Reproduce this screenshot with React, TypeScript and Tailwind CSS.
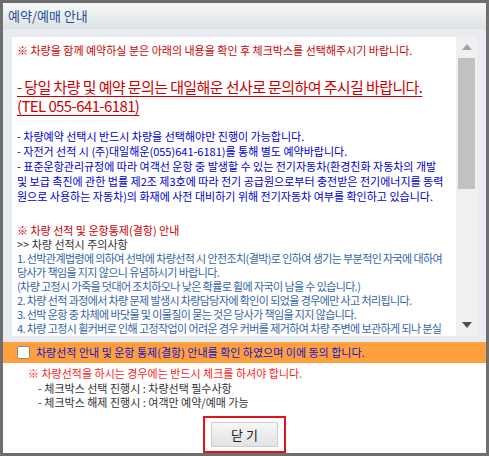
import { useState } from "react";

const font = { fontFamily: '"Noto Sans CJK KR", "Noto Sans", sans-serif' };

export default function App() {
  const [agree, setAgree] = useState(false);

  return (
    <div className="h-[456px] w-[489px] bg-[#6e6e6e] pt-[3px] pl-[3px]" style={font}>
      <div className="flex h-[450px] w-[483px] flex-col bg-white">
        {/* title bar */}
        <div className="flex h-[26px] items-center bg-gradient-to-b from-[#f7f8f9] to-[#dde2e6] pl-[5px] text-[13px] text-[#1d4f91]">
          예약/예매 안내
        </div>

        {/* body */}
        <div className="flex h-[316px] flex-col bg-[#e8ecf0] px-[9px] pt-[8px]">
          <div className="flex h-[299px]">
            <div className="h-full flex-1 overflow-hidden bg-white pl-[5px] pr-[11px] pt-[6px] text-[11px]">
              <p className="text-[11px] leading-[15px] text-[#cc0000]">
                ※ 차량을 함께 예약하실 분은 아래의 내용을 확인 후 체크박스를 선택해주시기 바랍니다.
              </p>
              <p className="mt-[19px] text-[15px] leading-[19px] tracking-[-0.6px] text-[#cc0000] underline underline-offset-[3px]">
                - 당일 차량 및 예약 문의는 대일해운 선사로 문의하여 주시길 바랍니다.
                <br />
                (TEL 055-641-6181)
              </p>
              <div className="mt-[14px] text-[#0000cc]">
                <p className="text-[11px] leading-[15px]">- 차량예약 선택시 반드시 차량을 선택해야만 진행이 가능합니다.</p>
                <p className="text-[11px] leading-[15px]">- 자전거 선적 시 (주)대일해운(055)641-6181)를 통해 별도 예약바랍니다.</p>
                <p className="text-[11px] leading-[15px]">
                  - 표준운항관리규정에 따라 여객선 운항 중 발생할 수 있는 전기자동차(환경친화 자동차의 개발 및 보급 촉진에 관한 법률 제2조 제3호에 따라 전기 공급원으로부터 충전받은 전기에너지를 동력원으로 사용하는 자동차)의 화재에 사전 대비하기 위해 전기자동차 여부를 확인하고 있습니다.
                </p>
              </div>
              <p className="mt-[19px] text-[11px] leading-[14px] text-[#cc0000]">※ 차량 선적 및 운항통제(결항) 안내</p>
              <p className="text-[11px] leading-[14px] text-[#333333]">&gt;&gt; 차량 선적시 주의사항</p>
              <div className="tracking-[-0.6px] text-[#3465a8]">
                <p className="text-[11px] leading-[14px]">
                  1. 선박관계법령에 의하여 선박에 차량선적 시 안전조치(결박)로 인하여 생기는 부분적인 자국에 대하여 당사가 책임을 지지 않으니 유념하시기 바랍니다.
                </p>
                <p className="text-[11px] leading-[14px]">
                  (차량 고정시 가죽을 덧대어 조치하오나 낮은 확률로 휠에 자국이 남을 수 있습니다.)
                </p>
                <p className="text-[11px] leading-[14px]">
                  2. 차량 선적 과정에서 차량 문제 발생시 차량담당자에 확인이 되었을 경우에만 사고 처리됩니다.
                </p>
                <p className="text-[11px] leading-[14px]">
                  3. 선박 운항 중 차체에 바닷물 및 이물질이 묻는 것은 당사가 책임을 지지 않습니다.
                </p>
                <p className="text-[11px] leading-[14px]">
                  4. 차량 고정시 휠커버로 인해 고정작업이 어려운 경우 커버를 제거하여 차량 주변에 보관하게 되나 분실되는 사례가 있사오니 사전에 분리하시어 트렁크에 보관해 주시기 바랍니다.
                </p>
              </div>
            </div>

            {/* scrollbar */}
            <div className="flex h-full w-[21px] flex-col items-center bg-[#f0f0f0]">
              <div className="flex h-[21px] w-full items-center justify-center">
                <svg width="10" height="6" viewBox="0 0 10 6">
                  <path d="M0 6 L5 0 L10 6 Z" fill="#a3a3a3" />
                </svg>
              </div>
              <div className="h-[131px] w-[17px] bg-[#c1c1c1]" />
              <div className="flex-1" />
              <div className="flex h-[21px] w-full items-center justify-center">
                <svg width="10" height="6" viewBox="0 0 10 6">
                  <path d="M0 0 L10 0 L5 6 Z" fill="#505050" />
                </svg>
              </div>
            </div>
          </div>
        </div>

        {/* agreement bar */}
        <label className="flex h-[21px] cursor-pointer items-center bg-[#ffa03e] pl-[14px] text-[11px] text-[#1414cc]">
          <input
            type="checkbox"
            checked={agree}
            onChange={(e) => setAgree(e.target.checked)}
            className="mr-[6px] h-[13px] w-[13px] appearance-none rounded-[2px] border border-[#8a8a8a] bg-white checked:bg-[#1c6fd1]"
          />
          차량선적 안내 및 운항 통제(결항) 안내를 확인 하였으며 이에 동의 합니다.
        </label>

        {/* notes */}
        <div className="flex flex-1 flex-col bg-white pt-[2px] text-[11px]">
          <p className="pl-[25px] text-[11px] leading-[16px] text-[#ff1a1a]">
            ※ 차량선적을 하시는 경우에는 반드시 체크를 하셔야 합니다.
          </p>
          <p className="pl-[35px] text-[11px] leading-[14px] text-[#333333]">- 체크박스 선택 진행시 : 차량선택 필수사항</p>
          <p className="pl-[35px] text-[11px] leading-[14px] text-[#333333]">- 체크박스 해제 진행시 : 여객만 예약/예매 가능</p>

          <div className="mt-[7px] flex justify-center">
            <div className="border-2 border-[#e0141e] px-[6px] py-[4px]">
              <button
                type="button"
                className="h-[25px] w-[67px] border border-[#cfcfcf] bg-gradient-to-b from-[#f7f7f7] to-[#e2e2e2] text-[13px] text-[#222222]"
              >
                닫 기
              </button>
            </div>
          </div>
        </div>
      </div>
    </div>
  );
}
